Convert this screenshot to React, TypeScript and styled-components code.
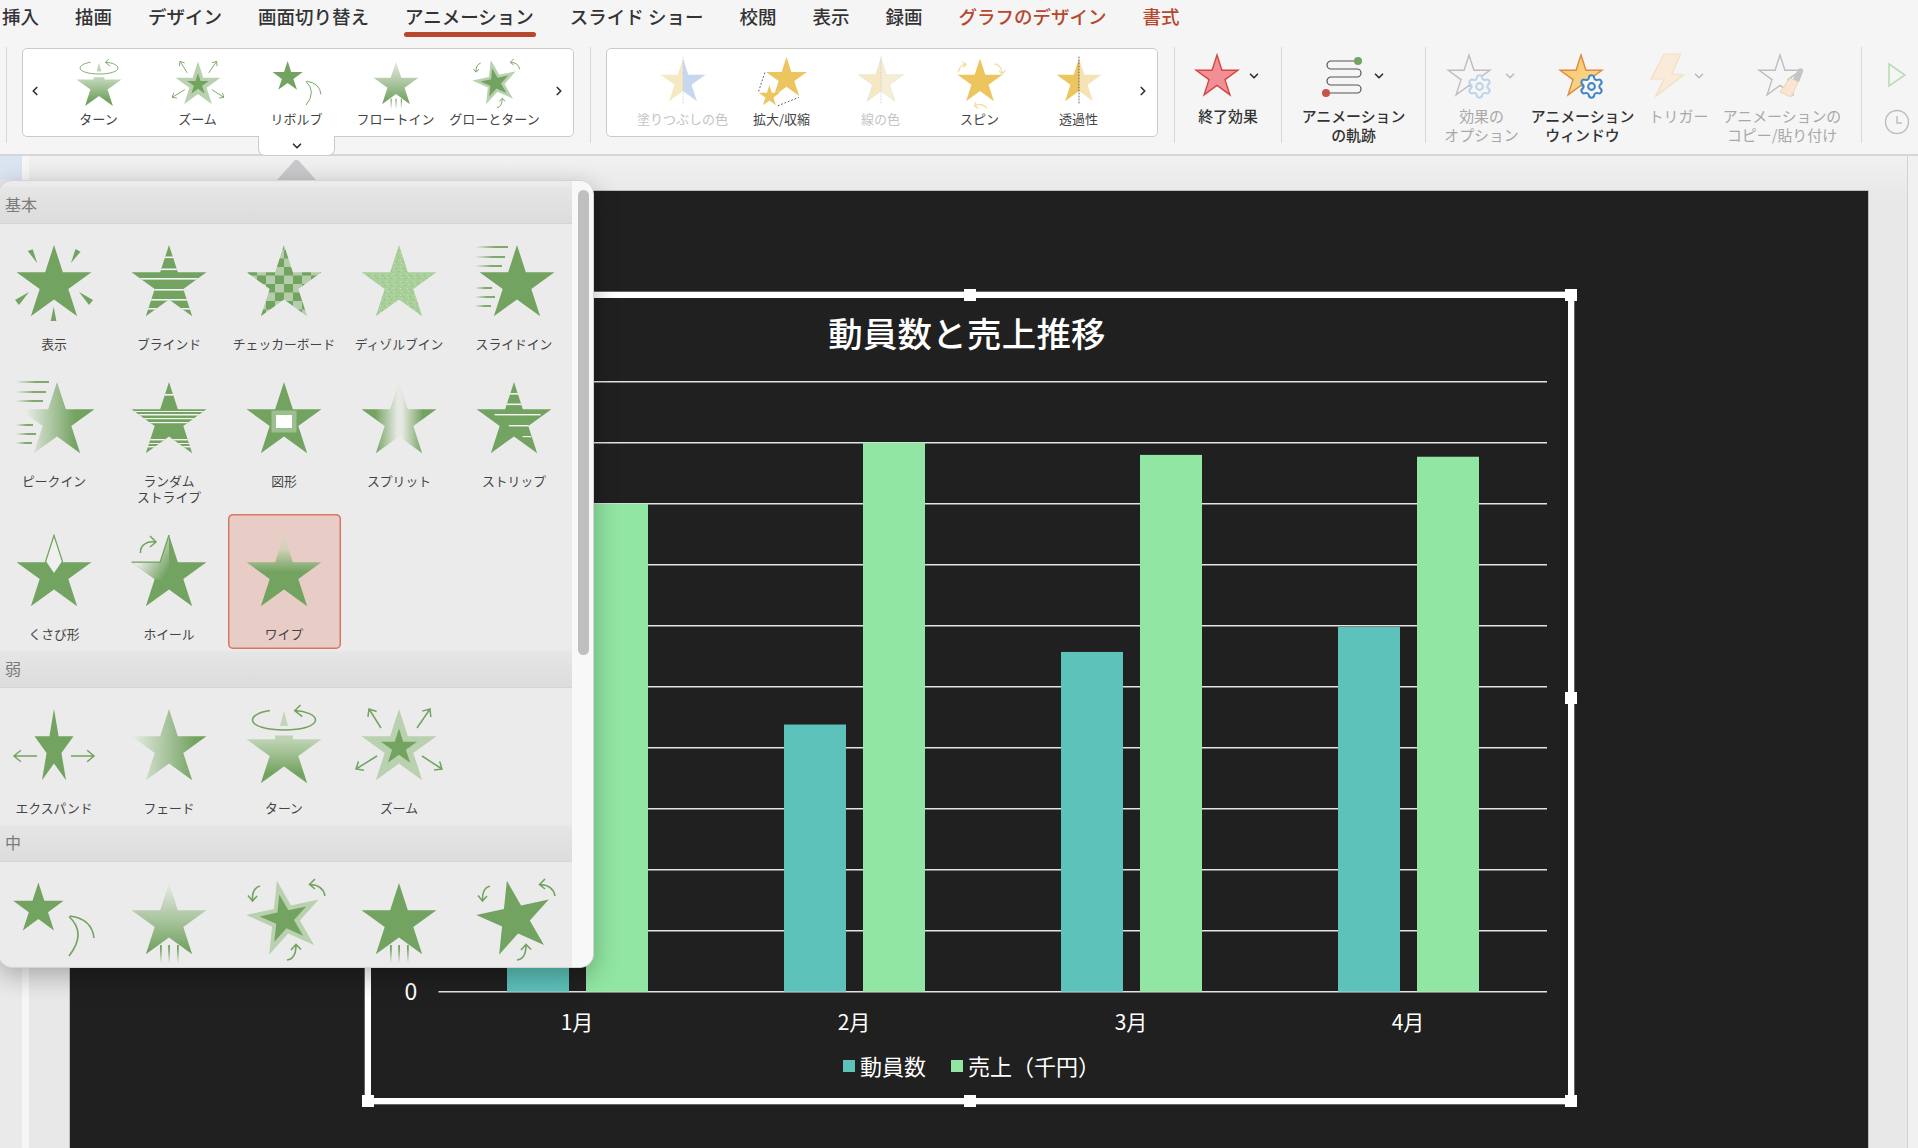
import React from 'react';
import styled, { createGlobalStyle } from 'styled-components';
import { ChevronDown, ChevronLeft, ChevronRight, Settings } from 'lucide-react';

const GREEN = '#73a360';
const PALE = '#b9d1ae';
const GOLD = '#edc55f';
const GOLD_PALE = '#f6e8c3';

// star helper: R is the outer radius, rot in degrees
const starPoints = (cx: number, cy: number, R: number, rot = 0, sx = 1) => {
  const pts: string[] = [];
  for (let i = 0; i < 10; i++) {
    const rad = i % 2 === 0 ? R : R * 0.382;
    const a = ((i * 36 + rot) * Math.PI) / 180;
    pts.push(`${(cx + rad * Math.sin(a) * sx).toFixed(2)},${(cy - rad * Math.cos(a)).toFixed(2)}`);
  }
  return pts.join(' ');
};

const STAR = starPoints(60, 53.4, 39.4);

const Arrow = ({ x1, y1, x2, y2, h = 7, color = GREEN }: any) => {
  const a = Math.atan2(y2 - y1, x2 - x1);
  const hx = (d: number) => x2 - h * Math.cos(a + d);
  const hy = (d: number) => y2 - h * Math.sin(a + d);
  return (
    <path
      d={`M${x1} ${y1} L${x2} ${y2} M${hx(0.7)} ${hy(0.7)} L${x2} ${y2} L${hx(-0.7)} ${hy(-0.7)}`}
      fill="none"
      stroke={color}
      strokeWidth={1.5}
    />
  );
};

const Glyph = ({ scale = 1, children }: any) => (
  <GlyphSvg viewBox="0 0 120 96" width={120 * scale} height={96 * scale}>
    {children}
  </GlyphSvg>
);

// white bands cut through the star, clipped so they don't show outside it
const Stripes = ({ id, rows }: { id: string; rows: number[][] }) => (
  <>
    <defs>
      <clipPath id={id}>
        <polygon points={STAR} />
      </clipPath>
    </defs>
    <g clipPath={`url(#${id})`}>
      {rows.map(([x, y, w, h], i) => (
        <rect key={i} x={x} y={y} width={w} height={h} fill="#f4f4f4" />
      ))}
    </g>
  </>
);

const SpeedLines = ({ id, rows }: { id: string; rows: number[][] }) => (
  <>
    <defs>
      <linearGradient id={id}>
        <stop offset="0" stopColor={GREEN} stopOpacity="0" />
        <stop offset="0.6" stopColor={GREEN} stopOpacity="0.9" />
      </linearGradient>
    </defs>
    {rows.map(([x, y, w], i) => (
      <rect key={i} x={x} y={y} width={w} height={2} fill={`url(#${id})`} />
    ))}
  </>
);

const FloatLines = ({ id }: { id: string }) => (
  <>
    <defs>
      <linearGradient id={id} x1="0" y1="0" x2="0" y2="1">
        <stop offset="0.2" stopColor={GREEN} />
        <stop offset="1" stopColor={GREEN} stopOpacity="0" />
      </linearGradient>
    </defs>
    {[51, 59.2, 68].map((x) => (
      <rect key={x} x={x} y={76} width={1.8} height={18} fill={`url(#${id})`} />
    ))}
  </>
);

const TurnArrows = ({ color = GREEN }: { color?: string }) => (
  <g fill="none" stroke={color} strokeWidth={1.6}>
    <path d="M36 17 Q28 19 28.5 31 M24 26.5 L28.5 32 L33 27" />
    <path d="M101 27 Q99 16 86 15.5 M91 10 L85.5 15.5 L91 20" />
    <path d="M63 91 Q72 90 72 76 M67 81 L72 75.5 L77 80.5" />
  </g>
);

const AppearIcon = ({ scale }: any) => (
  <Glyph scale={scale}>
    <polygon points={STAR} fill={GREEN} />
    <g fill={GREEN}>
      <polygon points="33.7,20 38.7,18.3 43.3,32.3" />
      <polygon points="86.5,20.7 81.5,18 77,32" />
      <polygon points="21,69 35,61 25,74" />
      <polygon points="99,69 85,61 95,74" />
      <polygon points="56.7,90 62.4,90 59.7,75.7" />
    </g>
  </Glyph>
);

const BlindsIcon = ({ scale }: any) => (
  <Glyph scale={scale}>
    <polygon points={STAR} fill={GREEN} />
    <Stripes id="blindsClip" rows={[[20, 25.5, 80, 1.6], [20, 37.5, 80, 1.6], [20, 47, 80, 1.6], [20, 58, 80, 1.6], [20, 68, 80, 1.6], [20, 77, 80, 1.6]]} />
  </Glyph>
);

const CheckerIcon = ({ scale }: any) => (
  <Glyph scale={scale}>
    <defs>
      <pattern id="checker" width="18" height="17" patternUnits="userSpaceOnUse" x="6" y="2">
        <rect width="18" height="17" fill="#b4cdaa" />
        <rect width="9" height="8.5" fill={GREEN} />
        <rect x="9" y="8.5" width="9" height="8.5" fill={GREEN} />
      </pattern>
    </defs>
    <polygon points={STAR} fill="url(#checker)" />
  </Glyph>
);

const DissolveIcon = ({ scale }: any) => (
  <Glyph scale={scale}>
    <defs>
      <pattern id="speck" width="7" height="7" patternUnits="userSpaceOnUse">
        <rect width="7" height="7" fill="#a9d09a" />
        <rect x="1" y="2" width="1" height="1" fill="#8fbb7e" />
        <rect x="5" y="1" width="1" height="1" fill="#c3e0b7" />
        <rect x="3" y="5" width="1" height="1" fill="#8fbb7e" />
        <rect x="6" y="4" width="1" height="1" fill="#c3e0b7" />
      </pattern>
    </defs>
    <polygon points={STAR} fill="url(#speck)" />
  </Glyph>
);

const SlideInIcon = ({ scale }: any) => (
  <Glyph scale={scale}>
    <polygon points={starPoints(63, 53.4, 39.4)} fill={GREEN} />
    <SpeedLines id="slideLines" rows={[[21, 15, 33], [21, 25, 30], [21, 34, 27], [21, 56, 17], [21, 65, 20], [21, 74, 16]]} />
  </Glyph>
);

const PeekIcon = ({ scale }: any) => (
  <Glyph scale={scale}>
    <defs>
      <linearGradient id="peekFill">
        <stop offset="0.08" stopColor="#e9ece7" />
        <stop offset="0.75" stopColor={GREEN} />
      </linearGradient>
    </defs>
    <polygon points={starPoints(63, 53.4, 39.4)} fill="url(#peekFill)" />
    <SpeedLines id="peekLines" rows={[[22, 13, 33], [22, 23, 30], [22, 32, 27], [22, 56, 17], [22, 65, 20], [22, 74, 16]]} />
  </Glyph>
);

const RandomIcon = ({ scale }: any) => (
  <Glyph scale={scale}>
    <polygon points={STAR} fill={GREEN} />
    <Stripes id="randomClip" rows={[[20, 26, 80, 1.6], [20, 43, 80, 1], [20, 46, 80, 1.5], [20, 50, 80, 1.2], [20, 54, 80, 1.2], [20, 71, 80, 1.4], [20, 75, 80, 1], [20, 78, 80, 1.4]]} />
  </Glyph>
);

const ShapeIcon = ({ scale }: any) => (
  <Glyph scale={scale}>
    <polygon points={STAR} fill={GREEN} />
    <rect x="47.5" y="42.5" width="25" height="22" fill="#9dbf8f" />
    <rect x="52" y="47" width="16" height="13" fill="#ffffff" />
  </Glyph>
);

const SplitIcon = ({ scale }: any) => (
  <Glyph scale={scale}>
    <defs>
      <linearGradient id="splitFill">
        <stop offset="0.18" stopColor={GREEN} />
        <stop offset="0.48" stopColor="#e6e9e3" />
        <stop offset="0.54" stopColor="#e6e9e3" />
        <stop offset="0.82" stopColor={GREEN} />
      </linearGradient>
    </defs>
    <polygon points={STAR} fill="url(#splitFill)" />
  </Glyph>
);

const StripIcon = ({ scale }: any) => (
  <Glyph scale={scale}>
    <polygon points={STAR} fill={GREEN} />
    <Stripes id="stripClip" rows={[[50, 25, 20, 1.6], [50, 35.5, 20, 1.6], [40.6, 46, 46, 1.4], [54.8, 57, 20, 1.4], [68.5, 68, 9, 1.2]]} />
  </Glyph>
);

const WedgeIcon = ({ scale }: any) => (
  <Glyph scale={scale}>
    <polygon points={STAR} fill={GREEN} />
    <polygon points="60,14.5 51.5,40.7 60,53 68.5,40.7" fill="#f0f0f0" stroke={GREEN} strokeWidth={1.2} />
  </Glyph>
);

const WheelIcon = ({ scale }: any) => (
  <Glyph scale={scale}>
    <defs>
      <linearGradient id="wheelFade" x1="0" y1="0" x2="1" y2="0.75">
        <stop offset="0.4" stopColor="#ebebeb" />
        <stop offset="1" stopColor={GREEN} />
      </linearGradient>
    </defs>
    <polygon points={STAR} fill={GREEN} />
    <polygon points="60,14 51.1,41.2 22.5,41.2 45.7,58 60,60" fill="url(#wheelFade)" />
    <path d="M60 14 L51.1 41.2 L22.5 41.2" fill="none" stroke={GREEN} strokeWidth={1.3} />
    <path d="M31.5 32 C31 24 38 20 46 21 M41 15 L47 21 L41 26" fill="none" stroke={GREEN} strokeWidth={1.5} />
  </Glyph>
);

const WipeIcon = ({ scale }: any) => (
  <Glyph scale={scale}>
    <defs>
      <linearGradient id="wipeFill" x1="0" y1="0" x2="0" y2="1">
        <stop offset="0" stopColor="#e0d4c4" />
        <stop offset="0.2" stopColor="#cfd2b4" />
        <stop offset="0.52" stopColor={GREEN} />
      </linearGradient>
    </defs>
    <polygon points={STAR} fill="url(#wipeFill)" />
  </Glyph>
);

const ExpandIcon = ({ scale }: any) => (
  <Glyph scale={scale}>
    <polygon points={starPoints(60, 53.4, 39.4, 0, 0.52)} fill={GREEN} />
    <Arrow x1={43} y1={61} x2={20} y2={61} h={9} />
    <Arrow x1={77} y1={61} x2={100} y2={61} h={9} />
  </Glyph>
);

const FadeIcon = ({ scale }: any) => (
  <Glyph scale={scale}>
    <defs>
      <linearGradient id="fadeFill">
        <stop offset="0" stopColor="#eaece8" />
        <stop offset="0.85" stopColor={GREEN} />
      </linearGradient>
    </defs>
    <polygon points={STAR} fill="url(#fadeFill)" />
  </Glyph>
);

const TurnIcon = ({ scale }: any) => (
  <Glyph scale={scale}>
    <defs>
      <linearGradient id="turnFill" x1="0" y1="0" x2="0" y2="1">
        <stop offset="0.1" stopColor="#bdd3b3" />
        <stop offset="0.8" stopColor={GREEN} />
      </linearGradient>
    </defs>
    <polygon
      points="22.5,44.2 51,44.2 51,40.5 69,40.5 69,44.2 97.5,44.2 74.3,61 83.2,88.3 60,71.5 36.8,88.3 45.7,61"
      fill="url(#turnFill)"
    />
    <polygon points="60,16 56,31 64,31" fill="#c2d5b9" />
    <path
      d="M46 15.5 C35 17 28.5 21 28.5 25 C28.5 31 43 35 60 35 C78 35 91.5 31 91.5 25 C91.5 20 82 16 71 15.5 M76.5 10 L70.7 15.7 L78.3 21.7"
      fill="none"
      stroke={GREEN}
      strokeWidth={1.5}
    />
  </Glyph>
);

const ZoomIcon = ({ scale }: any) => (
  <Glyph scale={scale}>
    <polygon points={STAR} fill={PALE} />
    <polygon points={starPoints(60, 52.5, 19)} fill={GREEN} />
    <Arrow x1={42} y1={33} x2={30} y2={14} h={8} />
    <Arrow x1={78} y1={33} x2={91} y2={14} h={8} />
    <Arrow x1={38} y1={61} x2={17} y2={74} h={8} />
    <Arrow x1={83} y1={61} x2={103} y2={74} h={8} />
  </Glyph>
);

const RevolveIcon = ({ scale }: any) => (
  <Glyph scale={scale}>
    <polygon points={starPoints(44.4, 40, 26.5)} fill={GREEN} />
    <path d="M76 47 Q98 50 100 69 M75 47.5 Q93 64 75 87" fill="none" stroke={GREEN} strokeWidth={1.6} />
  </Glyph>
);

const FloatInIcon = ({ scale }: any) => (
  <Glyph scale={scale}>
    <defs>
      <linearGradient id="floatFill" x1="0" y1="0" x2="0" y2="1">
        <stop offset="0" stopColor="#e8ebe6" />
        <stop offset="0.95" stopColor={GREEN} />
      </linearGradient>
    </defs>
    <polygon points={STAR} fill="url(#floatFill)" />
    <FloatLines id="floatLines" />
  </Glyph>
);

const GrowTurnIcon = ({ scale }: any) => (
  <Glyph scale={scale}>
    <polygon points={starPoints(61, 50, 39, -12)} fill={PALE} />
    <polygon points={starPoints(60.5, 50, 25, -12)} fill={GREEN} />
    <TurnArrows />
  </Glyph>
);

const RiseIcon = ({ scale }: any) => (
  <Glyph scale={scale}>
    <polygon points={STAR} fill={GREEN} />
    <FloatLines id="riseLines" />
  </Glyph>
);

const SwivelIcon = ({ scale }: any) => (
  <Glyph scale={scale}>
    <polygon points={starPoints(61, 50, 39, -12)} fill={GREEN} />
    <TurnArrows />
  </Glyph>
);

const GOLD_STAR = starPoints(60, 48.4, 39.4);

const HalfIcon = ({ id, left, right, stroke, dash }: any) => (
  <Glyph scale={0.6}>
    <defs>
      <linearGradient id={id}>
        <stop offset="0.5" stopColor={left} />
        <stop offset="0.5" stopColor={right} />
      </linearGradient>
    </defs>
    <polygon points={GOLD_STAR} fill={`url(#${id})`} stroke={stroke} strokeWidth={stroke ? 1 : 0} />
    <line x1="60" y1="6" x2="60" y2="84" stroke={dash} strokeWidth="1.2" strokeDasharray="3 2" />
  </Glyph>
);

const GrowIcon = () => (
  <Glyph scale={0.6}>
    <polygon points={starPoints(67.5, 42.6, 36)} fill={GOLD} />
    <polygon points={starPoints(39, 72, 18.5)} fill={GOLD} />
    <path d="M21 64 L32 31 M53 88 L88 74" stroke="#444" strokeWidth="1.4" strokeDasharray="3 3" fill="none" />
  </Glyph>
);

const SpinIcon = () => (
  <Glyph scale={0.6}>
    <polygon points={starPoints(60, 48.4, 39.4)} fill={GOLD} />
    <g fill="none" stroke="#f3dca0" strokeWidth={2}>
      <path d="M24 32 Q26 20 36 19 M31 15 L37 19 L32 24" />
      <path d="M84 18 Q96 20 97 34 M92 30 L97 35 L102 29" />
      <path d="M72 92 Q62 82 52 88 M57 93 L51 88 L53 82" />
    </g>
  </Glyph>
);

const FillColorIcon = () => <HalfIcon id="halfBlue" left={GOLD_PALE} right="#c6d8f0" dash="#c9c9c9" />;
const LineColorIcon = () => <HalfIcon id="halfLine" left={GOLD_PALE} right="#f5edd6" stroke="#e3dfd2" dash="#c9c9c9" />;
const OpacityIcon = () => <HalfIcon id="halfOpacity" left={GOLD} right="#f5e3b5" dash="#333" />;

const galleryLeft = [
  { label: 'ターン', Icon: TurnIcon },
  { label: 'ズーム', Icon: ZoomIcon },
  { label: 'リボルブ', Icon: RevolveIcon },
  { label: 'フロートイン', Icon: FloatInIcon },
  { label: 'グローとターン', Icon: GrowTurnIcon },
];

const galleryRight = [
  { label: '塗りつぶしの色', Icon: FillColorIcon, off: true },
  { label: '拡大/収縮', Icon: GrowIcon },
  { label: '線の色', Icon: LineColorIcon, off: true },
  { label: 'スピン', Icon: SpinIcon },
  { label: '透過性', Icon: OpacityIcon },
];

const sections = [
  {
    title: '基本',
    items: [
      { label: '表示', Icon: AppearIcon },
      { label: 'ブラインド', Icon: BlindsIcon },
      { label: 'チェッカーボード', Icon: CheckerIcon },
      { label: 'ディゾルブイン', Icon: DissolveIcon },
      { label: 'スライドイン', Icon: SlideInIcon },
      { label: 'ピークイン', Icon: PeekIcon },
      { label: 'ランダム\nストライプ', Icon: RandomIcon },
      { label: '図形', Icon: ShapeIcon },
      { label: 'スプリット', Icon: SplitIcon },
      { label: 'ストリップ', Icon: StripIcon },
      { label: 'くさび形', Icon: WedgeIcon },
      { label: 'ホイール', Icon: WheelIcon },
      { label: 'ワイプ', Icon: WipeIcon, selected: true },
    ],
  },
  {
    title: '弱',
    items: [
      { label: 'エクスパンド', Icon: ExpandIcon },
      { label: 'フェード', Icon: FadeIcon },
      { label: 'ターン', Icon: TurnIcon },
      { label: 'ズーム', Icon: ZoomIcon },
    ],
  },
  {
    title: '中',
    items: [
      { label: '', Icon: RevolveIcon },
      { label: '', Icon: FloatInIcon },
      { label: '', Icon: GrowTurnIcon },
      { label: '', Icon: RiseIcon },
      { label: '', Icon: SwivelIcon },
    ],
  },
];

const tabs = [
  { label: '挿入' },
  { label: '描画' },
  { label: 'デザイン' },
  { label: '画面切り替え' },
  { label: 'アニメーション', active: true },
  { label: 'スライド ショー' },
  { label: '校閲' },
  { label: '表示' },
  { label: '録画' },
  { label: 'グラフのデザイン', accent: true },
  { label: '書式', accent: true },
];

const BOX_STAR = starPoints(22, 24, 22);

const Gear = ({ color }: { color: string }) => (
  <Settings x={19} y={20} width={27} height={27} color={color} fill="#f5f5f5" strokeWidth={1.8} />
);

const OptionsGlyph = () => (
  <BoxSvg width="48" height="46" viewBox="0 0 48 46">
    <polygon points={BOX_STAR} fill="none" stroke="#bdbdbd" strokeWidth="1.4" />
    <Gear color="#bcd4ea" />
  </BoxSvg>
);

const PaneGlyph = () => (
  <BoxSvg width="48" height="46" viewBox="0 0 48 46">
    <defs>
      <linearGradient id="paneStar" x1="0" y1="0" x2="1" y2="1">
        <stop offset="0" stopColor="#f9c65f" />
        <stop offset="1" stopColor="#f7dca0" />
      </linearGradient>
    </defs>
    <polygon points={BOX_STAR} fill="url(#paneStar)" stroke="#e0893f" strokeWidth="1.4" />
    <Gear color="#3f87c9" />
  </BoxSvg>
);

const EndGlyph = () => (
  <BoxSvg width="44" height="46" viewBox="0 0 44 46">
    <polygon points={BOX_STAR} fill="#f08f96" stroke="#d6453f" strokeWidth="1.4" />
  </BoxSvg>
);

const PathGlyph = () => (
  <BoxSvg width="42" height="46" viewBox="0 -4 42 46">
    <path
      d="M36 4 H9 A4 4 0 0 0 9 12 H35 A4 4 0 0 1 35 20 H9 A4 4 0 0 0 9 28 H35 A4 4 0 0 1 35 36 H4"
      fill="none"
      stroke="#555"
      strokeWidth="1.2"
    />
    <circle cx="36" cy="4" r="4" fill={GREEN} />
    <circle cx="4" cy="36" r="4" fill="#c4544c" />
  </BoxSvg>
);

const BoltGlyph = () => (
  <BoxSvg width="33" height="46" viewBox="0 -1 33 46">
    <polygon points="13,0 29.4,0 21,20 32.4,21 4.3,42.7 13,25 0,25" fill="#f9ebd8" stroke="#f3dfc5" strokeWidth="1.2" />
  </BoxSvg>
);

const CopyGlyph = () => (
  <BoxSvg width="48" height="46" viewBox="0 0 48 46">
    <polygon points={BOX_STAR} fill="none" stroke="#bdbdbd" strokeWidth="1.4" />
    <polygon points="32,25 40,29 33,44 22,39" fill="#f9e6d2" stroke="#f3d3b0" strokeWidth="1" />
    <path d="M35 26 L40 17 A2.5 2.5 0 0 1 45 19 L41 29 Z" fill="#c4c4c4" />
  </BoxSvg>
);

const bigButtons = [
  { label: '終了効果', Glyph: EndGlyph, caret: true, width: 106 },
  { sep: true },
  { label: 'アニメーション\nの軌跡', Glyph: PathGlyph, caret: true, width: 143 },
  { sep: true },
  { label: '効果の\nオプション', Glyph: OptionsGlyph, caret: true, width: 111, off: true },
  { label: 'アニメーション\nウィンドウ', Glyph: PaneGlyph, width: 91 },
  { label: 'トリガー', Glyph: BoltGlyph, caret: true, width: 101, off: true },
  { label: 'アニメーションの\nコピー/貼り付け', Glyph: CopyGlyph, width: 106, off: true },
];

// chart: y coordinates are in the page's own pixels, set by the viewBox
const chartData = [
  { month: '1月', x: 507, people: 3.1, sales: 8 },
  { month: '2月', x: 784, people: 4.38, sales: 9 },
  { month: '3月', x: 1061, people: 5.57, sales: 8.8 },
  { month: '4月', x: 1338, people: 5.98, sales: 8.77 },
];
const ZERO_Y = 991.7;
const STEP = 61;

const Chart = () => (
  <ChartSvg viewBox="371 298 1197 800" width="1197" height="800">
    {Array.from({ length: 11 }).map((_, i) => (
      <line key={i} x1="438.5" x2="1547" y1={ZERO_Y - i * STEP} y2={ZERO_Y - i * STEP} stroke="#e4e4e4" strokeWidth="1.5" />
    ))}
    {chartData.map((d) => (
      <g key={d.month}>
        <rect x={d.x} y={ZERO_Y - d.people * STEP} width="62" height={d.people * STEP} fill="#5cc2ba" />
        <rect x={d.x + 79} y={ZERO_Y - d.sales * STEP} width="62" height={d.sales * STEP} fill="#91e6a3" />
        <ChartText x={d.x + 70} y={1030} fontSize="21" textAnchor="middle">
          {d.month}
        </ChartText>
      </g>
    ))}
    <ChartTitle x="967" y="347" fontSize="34.4" textAnchor="middle">
      動員数と売上推移
    </ChartTitle>
    <ChartText x="411" y="1000" fontSize="23" textAnchor="middle">
      0
    </ChartText>
    <rect x="843" y="1060" width="12" height="12" fill="#5cc2ba" />
    <ChartText x="860" y="1075" fontSize="22">
      動員数
    </ChartText>
    <rect x="951" y="1060" width="12" height="12" fill="#91e6a3" />
    <ChartText x="968" y="1075" fontSize="22">
      売上（千円）
    </ChartText>
  </ChartSvg>
);

const App = () => {
  return (
    <Page>
      <GlobalStyle />
      <Ribbon>
        <TabBar>
          {tabs.map((t) => (
            <Tab key={t.label} $active={t.active} $accent={t.accent}>
              {t.label}
            </Tab>
          ))}
        </TabBar>
        <ToolRow>
          <Separator />
          <Gallery>
            <GalleryNav $lead>
              <ChevronLeft size={14} strokeWidth={3} />
            </GalleryNav>
            {galleryLeft.map(({ label, Icon }) => (
              <GalleryItem key={label}>
                <Icon scale={0.6} />
                <GalleryLabel>{label}</GalleryLabel>
              </GalleryItem>
            ))}
            <GalleryNav>
              <ChevronRight size={14} strokeWidth={3} />
            </GalleryNav>
            <ExpandTab>
              <ChevronDown size={14} strokeWidth={3} />
            </ExpandTab>
          </Gallery>
          <Separator />
          <Gallery>
            <GalleryNav $lead />
            {galleryRight.map(({ label, Icon, off }) => (
              <GalleryItem key={label}>
                <Icon />
                <GalleryLabel $off={off}>{label}</GalleryLabel>
              </GalleryItem>
            ))}
            <GalleryNav>
              <ChevronRight size={14} strokeWidth={3} />
            </GalleryNav>
          </Gallery>
          <Separator />
          {bigButtons.map((b, i) =>
            b.sep ? (
              <Separator key={i} />
            ) : (
              <BigButton key={b.label} $width={b.width}>
                <BigIconRow>
                  {b.Glyph && <b.Glyph />}
                  {b.caret && (
                    <CaretSlot $off={b.off}>
                      <ChevronDown size={14} strokeWidth={3} />
                    </CaretSlot>
                  )}
                </BigIconRow>
                <BigLabel $off={b.off}>{b.label}</BigLabel>
              </BigButton>
            ),
          )}
          <EndSeparator />
          <PlayColumn>
            <svg width="20" height="26" viewBox="0 0 20 26">
              <polygon points="2,2 18,13 2,24" fill="none" stroke="#b9ddb4" strokeWidth="1.6" />
            </svg>
            <svg width="26" height="26" viewBox="0 0 26 26">
              <circle cx="13" cy="13" r="11.5" fill="none" stroke="#bdbdbd" strokeWidth="1.4" />
              <path d="M13 7 V14 H18" fill="none" stroke="#bdbdbd" strokeWidth="1.4" />
            </svg>
          </PlayColumn>
        </ToolRow>
      </Ribbon>

      <Workspace>
        <ThumbStrip />
        <Canvas>
          <Slide>
            <ChartFrame>
              <Chart />
              {[
                [0, 0],
                [50, 0],
                [100, 0],
                [0, 50],
                [100, 50],
                [0, 100],
                [50, 100],
                [100, 100],
              ].map(([x, y]) => (
                <Handle key={`${x}-${y}`} $x={x} $y={y} />
              ))}
            </ChartFrame>
          </Slide>
        </Canvas>
        <RightRail />
      </Workspace>

      <PopCaret />
      <EffectPanel>
        <PanelScroll>
          {sections.map((s) => (
            <React.Fragment key={s.title}>
              <SectionHead>{s.title}</SectionHead>
              <EffectGrid>
                {s.items.map(({ label, Icon, selected }, i) => (
                  <EffectCell key={i} $selected={selected}>
                    <Icon />
                    {label && <EffectLabel>{label}</EffectLabel>}
                  </EffectCell>
                ))}
              </EffectGrid>
            </React.Fragment>
          ))}
        </PanelScroll>
        <ScrollTrack>
          <ScrollThumb />
        </ScrollTrack>
      </EffectPanel>
    </Page>
  );
};

export default App;

const GlobalStyle = createGlobalStyle`
  html, body {
    margin: 0;
    padding: 0;
    background: #f5f5f5;
  }
  * {
    box-sizing: border-box;
  }
  body {
    font-family: "Noto Sans CJK JP", "Noto Sans", sans-serif;
    overflow: hidden;
  }
`;

const Page = styled.div`
  position: relative;
  width: 1918px;
  height: 1148px;
  overflow: hidden;
  display: flex;
  flex-direction: column;
`;

const Ribbon = styled.header`
  height: 156px;
  flex-shrink: 0;
  background: #f5f5f5;
  border-bottom: 2px solid #d6d6d6;
`;

const TabBar = styled.nav`
  height: 48px;
  display: flex;
  padding-left: 2px;
  gap: 36px;
`;

const Tab = styled.div<{ $active?: boolean; $accent?: boolean }>`
  position: relative;
  height: 37px;
  line-height: 33px;
  font-size: 18.5px;
  font-weight: 500;
  white-space: nowrap;
  color: ${(p) => (p.$accent ? '#b5482e' : '#333')};

  &::after {
    content: '';
    display: ${(p) => (p.$active ? 'block' : 'none')};
    position: absolute;
    left: -1px;
    right: -2px;
    bottom: 0;
    height: 5px;
    border-radius: 3px;
    background: #b8472d;
  }
`;

const ToolRow = styled.div`
  display: flex;
  align-items: flex-start;
  padding-left: 6px;
`;

const Separator = styled.div`
  width: 1px;
  height: 96px;
  margin-top: -1px;
  background: #d9d9d9;
  flex-shrink: 0;
`;

const EndSeparator = styled(Separator)`
  margin-left: 26px;
`;

const Gallery = styled.div`
  position: relative;
  width: 552px;
  height: 89px;
  margin: 0 16px 0 15px;
  display: flex;
  background: #fff;
  border: 1px solid #cbcbcb;
  border-radius: 5px;
  flex-shrink: 0;
`;

const GalleryNav = styled.div<{ $lead?: boolean }>`
  flex: ${(p) => (p.$lead ? '0 0 26px' : '1')};
  display: flex;
  align-items: center;
  justify-content: center;
  color: #333;
  padding: ${(p) => (p.$lead ? '0 3px 4px 0' : '0 0 4px 0')};
`;

const GalleryItem = styled.div`
  width: 99px;
  padding-top: 4px;
  display: flex;
  flex-direction: column;
  align-items: center;
  flex-shrink: 0;
`;

const GalleryLabel = styled.div<{ $off?: boolean }>`
  font-size: 13px;
  line-height: 16px;
  white-space: nowrap;
  color: ${(p) => (p.$off ? '#c4c4c4' : '#444')};
`;

const ExpandTab = styled.div`
  position: absolute;
  left: 235px;
  top: 100%;
  width: 77px;
  height: 20px;
  background: #fff;
  border: 1px solid #cbcbcb;
  border-top: 0;
  border-radius: 0 0 7px 7px;
  display: flex;
  align-items: center;
  justify-content: center;
  color: #333;
`;

const GlyphSvg = styled.svg`
  display: block;
  flex-shrink: 0;
`;

const BoxSvg = styled.svg`
  display: block;
  flex-shrink: 0;
  overflow: visible;
`;

const BigButton = styled.div<{ $width?: number }>`
  width: ${(p) => p.$width}px;
  padding-top: 5px;
  display: flex;
  flex-direction: column;
  align-items: center;
  flex-shrink: 0;
`;

const BigIconRow = styled.div`
  height: 46px;
  display: flex;
  align-items: center;
  gap: 8px;
`;

const CaretSlot = styled.div<{ $off?: boolean }>`
  display: flex;
  color: ${(p) => (p.$off ? '#bdbdbd' : '#333')};
`;

const BigLabel = styled.div<{ $off?: boolean }>`
  margin-top: 7px;
  font-size: 14.9px;
  line-height: 19px;
  text-align: center;
  white-space: pre;
  font-weight: ${(p) => (p.$off ? 400 : 500)};
  color: ${(p) => (p.$off ? '#a8a8a8' : '#333')};
`;

const PlayColumn = styled.div`
  padding: 14px 0 0 22px;
  display: flex;
  flex-direction: column;
  align-items: center;
  gap: 21px;
`;

const Workspace = styled.main`
  flex: 1;
  display: flex;
  min-height: 0;
`;

const ThumbStrip = styled.aside`
  width: 29px;
  flex-shrink: 0;
  border-right: 7px solid #f6f6f6;
  background: linear-gradient(#dbe4f1 0, #dbe4f1 24px, #eaeaea 24px);
`;

const Canvas = styled.div`
  flex: 1;
  min-width: 0;
  padding: 35px 39px 0 41px;
  background: linear-gradient(#f1f1f1, #e8e8e8 40px);
`;

const Slide = styled.section`
  height: 100%;
  padding: 101px 0 0 295px;
  background: #202020;
  box-shadow: 0 0 0 1px #bdbdbd;
`;

const ChartFrame = styled.div`
  position: relative;
  width: 1209px;
  height: 812px;
  border: 6px solid #fff;
  outline: 1px solid rgba(150, 150, 150, 0.6);
`;

const ChartSvg = styled.svg`
  display: block;
`;

const ChartText = styled.text`
  fill: #fff;
  font-weight: 400;
  font-family: "Noto Sans CJK JP", sans-serif;
`;

const ChartTitle = styled(ChartText)`
  font-weight: 500;
  letter-spacing: 0.3px;
`;

// percent offsets measure the padding box, so nudge to sit on the border's centre
const Handle = styled.div<{ $x: number; $y: number }>`
  position: absolute;
  left: calc(${(p) => p.$x}% + ${(p) => (p.$x - 50) * 0.06}px);
  top: calc(${(p) => p.$y}% + ${(p) => (p.$y - 50) * 0.06}px);
  width: 12px;
  height: 12px;
  transform: translate(-50%, -50%);
  background: #fff;
`;

const RightRail = styled.div`
  width: 11px;
  flex-shrink: 0;
  background: #f1f1f1;
  border-left: 1px solid #d2d2d2;
`;

const PopCaret = styled.div`
  position: absolute;
  left: 277px;
  top: 160px;
  width: 39px;
  height: 20px;
  background: #c9c9cb;
  clip-path: polygon(0 100%, 46% 0, 54% 0, 100% 100%);
`;

const EffectPanel = styled.div`
  position: absolute;
  left: -2px;
  top: 180px;
  width: 596px;
  height: 788px;
  display: flex;
  overflow: hidden;
  background: #ebebeb;
  border: 1px solid #d4d4d4;
  border-radius: 14px;
  box-shadow: 0 8px 26px rgba(0, 0, 0, 0.28);
`;

const PanelScroll = styled.div`
  flex: 1;
  min-width: 0;
  padding-top: 6px;
  overflow: hidden;
`;

const SectionHead = styled.div`
  height: 37px;
  padding-left: 6px;
  line-height: 35px;
  font-size: 16px;
  color: #7a7a7a;
  background: linear-gradient(#e6e6e6, #dcdcdc);
  border-bottom: 1px solid #d4d4d4;
`;

const EffectGrid = styled.div`
  display: grid;
  grid-template-columns: repeat(5, 115px);
  margin-left: -2.5px;
`;

const EffectCell = styled.div<{ $selected?: boolean }>`
  align-self: start;
  height: ${(p) => (p.$selected ? '135px' : 'auto')};
  margin: 0 1px;
  padding: 7px 0 9px;
  display: flex;
  flex-direction: column;
  align-items: center;
  border-radius: 5px;
  background: ${(p) => (p.$selected ? '#e8cdc7' : 'transparent')};
  box-shadow: ${(p) => (p.$selected ? 'inset 0 0 0 1.5px #d97660' : 'none')};
`;

const EffectLabel = styled.div`
  margin-top: 9px;
  font-size: 12.8px;
  line-height: 16px;
  text-align: center;
  white-space: pre-line;
  color: #444;
`;

const ScrollTrack = styled.div`
  width: 21px;
  flex-shrink: 0;
  padding: 9px 4px 0 6px;
  background: #f8f8f8;
`;

const ScrollThumb = styled.div`
  height: 465px;
  border-radius: 6px;
  background: #bfbfbf;
`;
